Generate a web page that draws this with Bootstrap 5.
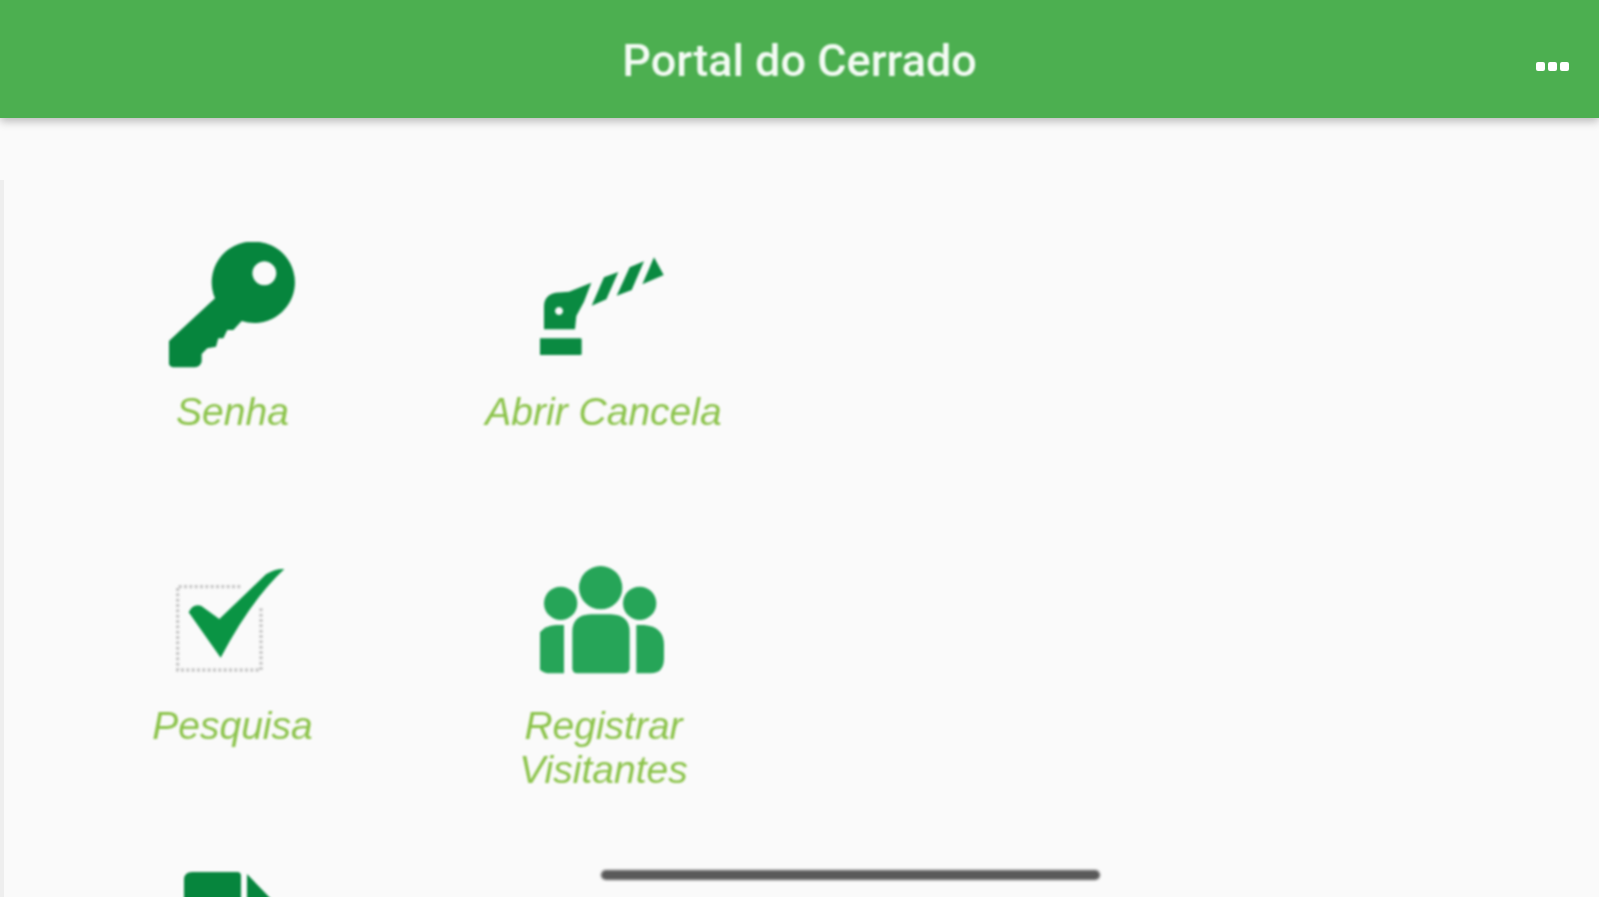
<!DOCTYPE html>
<html lang="pt-BR">
    <head>
        <meta charset="UTF-8">
        <title>Portal do Cerrado</title>
        <link href="https://cdn.jsdelivr.net/npm/bootstrap@5.3.3/dist/css/bootstrap.min.css" rel="stylesheet">
        <style>
            body { background: #fff; height: 900px; overflow: hidden; font-family: Roboto, "Liberation Sans", sans-serif; }
            .app-screen { height: 897px; background: #fafafa; overflow: hidden; }
            .app-bar { height: 118px; background: #4caf50; box-shadow: 0 3px 9px rgba(0,0,0,.28); grid-template-columns: 1fr auto 1fr; z-index: 2; }
            .app-title { font-size: 45px; font-weight: 500; color: #f4fbf4; filter: blur(.8px); margin-top: 4px; }
            .app-more { width: 36px; height: 12px; margin: 14px 28px 0 0; filter: blur(.7px); }
            .tile-grid { grid-template-columns: repeat(2, 371px); grid-auto-rows: 314px; padding: 124px 0 0 47px; }
            .tile-grid svg { width: 128px; height: 126px; filter: blur(.9px); }
            .tile-text { margin-top: 22px; padding: 0 50px; font-family: "Liberation Sans", Arial, sans-serif; font-size: 39px; line-height: 44px; font-style: italic; color: #8bc34a; filter: blur(.9px); }
            .edge-line { left: 0; top: 180px; bottom: 0; width: 4px; background: #eeeeee; }
            .home-bar { left: 601px; top: 870px; width: 499px; height: 10px; border-radius: 5px; background: #5a5a5a; filter: blur(1.6px); }
        </style>
    </head>
    <body>
        <div class="app-screen position-relative d-flex flex-column">
            <header class="app-bar d-grid align-items-center position-relative flex-shrink-0">
                <span></span>
                <span class="app-title">Portal do Cerrado</span>
                <svg class="app-more ms-auto" viewBox="0 0 36 12">
                    <rect x="1" y="2" width="9" height="9" rx="2" fill="#fff"/>
                    <rect x="13" y="2" width="9" height="9" rx="2" fill="#fff"/>
                    <rect x="25" y="2" width="9" height="9" rx="2" fill="#fff"/>
                </svg>
            </header>

            <main class="tile-grid d-grid text-center flex-grow-1">
                <div>
                    <svg class="d-block mx-auto" viewBox="57 36 384 378">
                        <path fill="#06853d" fill-rule="evenodd" d="M312 35a122 122 0 1 1 -37 238L250 300 232 300 220 325 205 325 198 350 172 355 155 372 155 395Q150 410 135 412L75 412Q57 412 55 395L52 350Q52 338 60 330L195 205A122 122 0 0 1 312 35ZM343 94a36 36 0 1 0 .1 0Z"/>
                    </svg>
                    <div class="tile-text">Senha</div>
                </div>
                <div>
                    <svg class="d-block mx-auto" viewBox="63 6 384 378">
                        <g fill="#0a8a41">
                            <rect x="55" y="295" width="133" height="50" rx="4"/>
                            <path fill-rule="evenodd" d="M75 268V200Q75 165 110 158L150 155 217 128 195 185 172 228 168 268ZM120 201a12 12 0 1 0 .1 0Z"/>
                            <path d="M218 197 255 112 298 96 262 178Z"/>
                            <path d="M293 167 332 82 375 64 338 150Z"/>
                            <path d="M370 133 405 52 434 105Z"/>
                        </g>
                    </svg>
                    <div class="tile-text">Abrir Cancela</div>
                </div>
                <div>
                    <svg class="d-block mx-auto" viewBox="29 3 384 378">
                        <path d="M305 160V345H55V95H245" fill="none" stroke="#c8c8c8" stroke-width="10" stroke-dasharray="9 7"/>
                        <path fill="#0a9444" d="M88 172Q100 145 125 152L180 192 320 58Q350 40 375 42 275 135 184 308Z"/>
                    </svg>
                    <div class="tile-text">Pesquisa</div>
                </div>
                <div>
                    <svg class="d-block mx-auto" viewBox="63 3 384 378">
                        <g fill="#26a558">
                            <circle cx="245" cy="98" r="65"/>
                            <circle cx="125" cy="145" r="50"/>
                            <circle cx="362" cy="145" r="50"/>
                            <path d="M160 230Q160 180 215 178H275Q332 180 332 230V340Q332 355 315 355H175Q160 355 160 340Z"/>
                            <path d="M135 210V355H95Q52 355 52 310V270Q52 215 110 210Z"/>
                            <path d="M352 210V355H395Q435 355 435 310V270Q435 215 375 210Z"/>
                        </g>
                    </svg>
                    <div class="tile-text">Registrar Visitantes</div>
                </div>
                <div>
                    <svg class="d-block mx-auto" viewBox="0 0 384 378">
                        <g fill="#06853d">
                            <path d="M45 30Q45 6 70 6H205Q216 6 216 18V130H45Z"/>
                            <path d="M234 12 304 85V130H234Z"/>
                        </g>
                    </svg>
                </div>
            </main>

            <div class="edge-line position-absolute"></div>
        </div>
        <div class="home-bar position-fixed"></div>

        <script src="https://cdn.jsdelivr.net/npm/bootstrap@5.3.3/dist/js/bootstrap.bundle.min.js"></script>
    </body>
</html>
